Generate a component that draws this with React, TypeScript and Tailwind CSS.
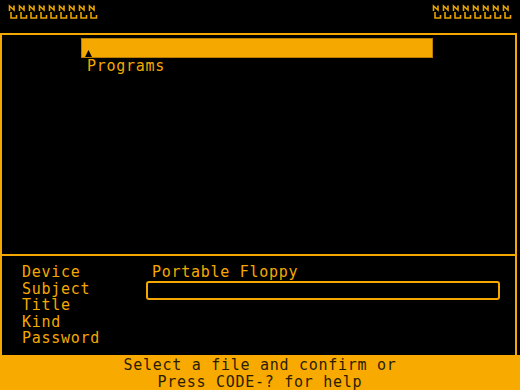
import React from 'react';

const mono = { fontFamily: '"DejaVu Sans Mono", "Liberation Mono", monospace' };

const Glyphs: React.FC<{ count: number }> = ({ count }) => (
  <svg width={count * 10} height={16} viewBox={`0 0 ${count * 10} 16`} className="block">
    {Array.from({ length: count }).map((_, i) => (
      <g key={i} transform={`translate(${i * 10} 0)`} fill="none" stroke="#e8a400" strokeWidth={1.6}>
        <path d="M1.5 7 V2 L6 6 V1.5" />
        <path d="M3 8 V14 H8.5 V11" />
      </g>
    ))}
  </svg>
);

const fields = ['Device', 'Subject', 'Title', 'Kind', 'Password'];

export default function App() {
  return (
    <div className="w-[520px] h-[390px] bg-black flex flex-col overflow-hidden text-[15px] tracking-[0.72px] text-[#f5a800]" style={mono}>
      {/* Status strip */}
      <div className="h-[33px] flex justify-between items-start pt-[4px] pl-[8px] pr-[8px] shrink-0">
        <Glyphs count={9} />
        <Glyphs count={8} />
      </div>

      {/* Main frame */}
      <div className="h-[322px] w-[517px] border-t-2 border-l-2 border-r-2 border-[#f5a800] flex flex-col shrink-0">
        {/* File list */}
        <div className="h-[221px] pt-[3px] pl-[79px] border-b-2 border-[#f5a800]">
          <div className="relative w-[352px] h-[20px] bg-[#f5a800] border border-[#b87c00]">
            <svg width="7" height="7" viewBox="0 0 7 7" className="absolute left-[3px] bottom-0">
              <path d="M3.5 0 L7 7 H0 Z" fill="#000" />
            </svg>
          </div>
          <div className="pl-[6px] leading-[16px]">Programs</div>
        </div>

        {/* Info area */}
        <div className="flex pt-[8px] pl-[20px] leading-[16.5px]">
          <div className="w-[124px] flex flex-col">
            {fields.map((f) => (
              <div key={f}>{f}</div>
            ))}
          </div>
          <div className="flex flex-col">
            <div className="pl-[6px]">Portable Floppy</div>
            <div className="w-[354px] h-[19px] border-2 border-[#f5a800] rounded-[3px]" />
          </div>
        </div>
      </div>

      {/* Help bar */}
      <div className="flex-1 bg-[#f8aa00] text-[#2a1c00] flex flex-col items-center pt-[2px] leading-[16.5px]">
        <div>Select a file and confirm or</div>
        <div>Press CODE-? for help</div>
      </div>
    </div>
  );
}
